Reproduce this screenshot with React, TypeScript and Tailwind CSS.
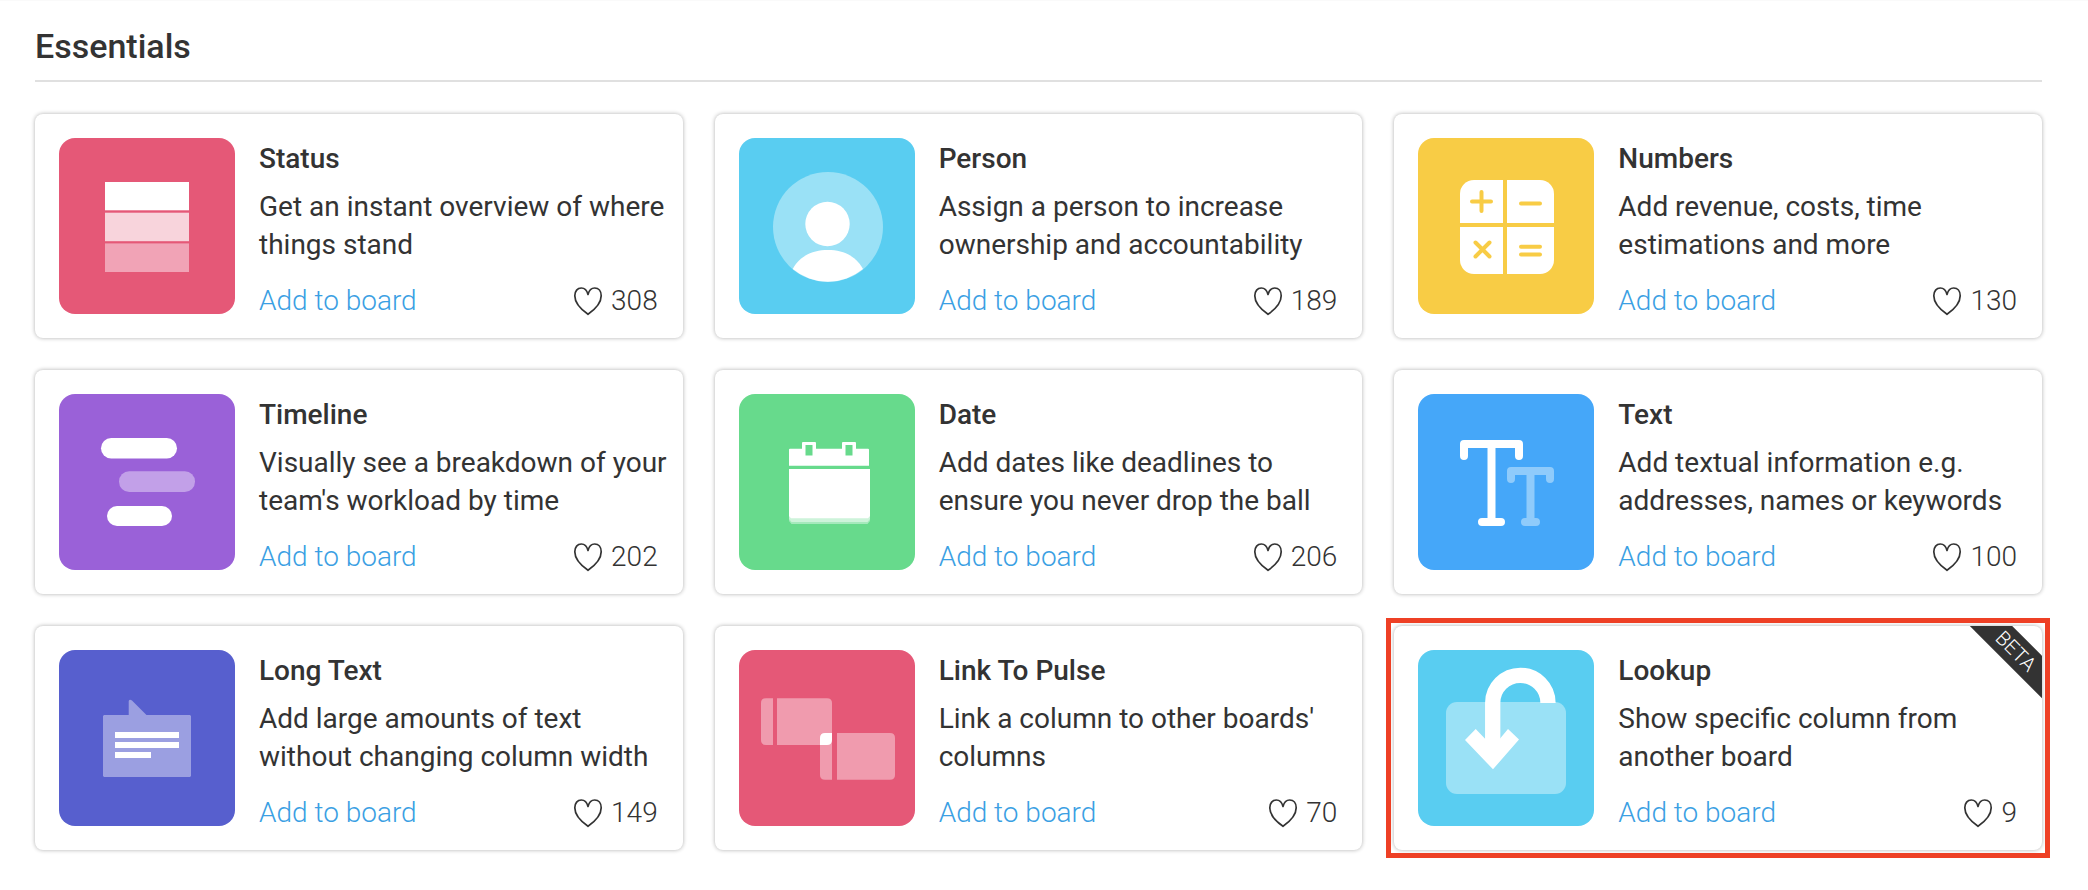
import type { ReactNode } from "react";

type Column = {
  name: string;
  description: string;
  likes: number;
  tile: string;
  icon: ReactNode;
  beta?: boolean;
  highlighted?: boolean;
};

const columns: Column[] = [
  {
    name: "Status",
    description: "Get an instant overview of where things stand",
    likes: 308,
    tile: "bg-[#e55877]",
    icon: (
      <>
        <rect x="46" y="44" width="84" height="28.3" fill="#fff" />
        <rect x="46" y="74.7" width="84" height="28.5" fill="#f8d4dc" />
        <rect x="46" y="105.4" width="84" height="28.6" fill="#f1a3b6" />
      </>
    ),
  },
  {
    name: "Person",
    description: "Assign a person to increase ownership and accountability",
    likes: 189,
    tile: "bg-[#59cdf1]",
    icon: (
      <>
        <circle cx="89" cy="89" r="55" fill="#9ae1f6" />
        <circle cx="88.5" cy="86" r="22.2" fill="#fff" />
        <path d="M53.7 131C61 117.500 74 112 89 112S116.500 117.500 124 131A55 55 0 0 1 53.7 131Z" fill="#fff" />
      </>
    ),
  },
  {
    name: "Numbers",
    description: "Add revenue, costs, time estimations and more",
    likes: 130,
    tile: "bg-[#f8cc45]",
    icon: (
      <>
        <rect x="42" y="42" width="94" height="94" rx="14" fill="#fff" />
        <path d="M87 42V136M42 87H136" stroke="#f8cc45" strokeWidth="4" />
        <path
          d="M63.5 54V73M54 63.500H73M103 65.500H122M57.500 104.500L71.500 118.500M71.500 104.500L57.500 118.500M103 108.700H122M103 116.500H122"
          stroke="#f8cc45"
          strokeWidth="4"
          strokeLinecap="round"
        />
      </>
    ),
  },
  {
    name: "Timeline",
    description: "Visually see a breakdown of your team's workload by time",
    likes: 202,
    tile: "bg-[#9a61d8]",
    icon: (
      <>
        <rect x="42" y="44" width="76" height="20.4" rx="10.2" fill="#fff" />
        <rect x="60" y="77.300" width="76" height="20.700" rx="10.2" fill="#c2a0e8" />
        <rect x="48" y="112" width="65" height="20" rx="10" fill="#fff" />
      </>
    ),
  },
  {
    name: "Date",
    description: "Add dates like deadlines to ensure you never drop the ball",
    likes: 206,
    tile: "bg-[#67da8c]",
    icon: (
      <>
        <path
          fillRule="evenodd"
          d="M50 55.500Q50 54.700 51 54.700H63V49Q63 48 64 48H76Q77 48 77 49V54.700H103V49Q103 48 104 48H116Q117 48 117 49V54.700H129Q130 54.700 130 55.700V71.700H50ZM66.500 51V61.500H73.500V51ZM106.500 51V61.500H113.500V51Z"
          fill="#fff"
        />
        <path d="M50 120H131V127L128.500 130H52.500L50 127Z" fill="#a5e9bc" />
        <path d="M50 120H131V125L128.500 128H52.500L50 125Z" fill="#cdf3da" />
        <path d="M50 75H131V122L129 124.300H52L50 122Z" fill="#fff" />
      </>
    ),
  },
  {
    name: "Text",
    description: "Add textual information e.g. addresses, names or keywords",
    likes: 100,
    tile: "bg-[#45a7f9]",
    icon: (
      <g fill="none" strokeWidth="8" strokeLinecap="round" strokeLinejoin="round">
        <path d="M93 85V77H132V85M112.500 77V128M107 128H118" stroke="#8fcbfb" />
        <path d="M46 62V50H101V62M73.500 50V128M64 128H83" stroke="#fff" />
      </g>
    ),
  },
  {
    name: "Long Text",
    description: "Add large amounts of text without changing column width",
    likes: 149,
    tile: "bg-[#575fce]",
    icon: (
      <>
        <path
          d="M45 65H69.700V51Q70.500 49 73 50.500L87.500 65H131L132 66V126L131 127H45L44 126V66Z"
          fill="#9b9fe1"
        />
        <path d="M56 82H120V88H56ZM56 92H120V98H56ZM56 102H92V108H56Z" fill="#fff" />
      </>
    ),
  },
  {
    name: "Link To Pulse",
    description: "Link a column to other boards' columns",
    likes: 70,
    tile: "bg-[#e55877]",
    icon: (
      <>
        <g fill="#f09bae">
          <path d="M34 48.300V95H27Q22 95 22 90V53Q22 48.300 27 48.300Z" />
          <path d="M38 48.300H88Q93 48.300 93 53V90Q93 95 88 95H38Z" />
          <path d="M93 83V129.700H86Q81 129.700 81 125V88Q81 83 86 83Z" />
          <path d="M98 83H151Q156 83 156 88V125Q156 129.700 151 129.700H98Z" />
        </g>
        <path d="M81 95V88Q81 83 86 83H93V90Q93 95 88 95Z" fill="#fff" />
      </>
    ),
  },
  {
    name: "Lookup",
    description: "Show specific column from another board",
    likes: 9,
    tile: "bg-[#59cdf1]",
    beta: true,
    highlighted: true,
    icon: (
      <>
        <rect x="28" y="52" width="120" height="92" rx="11" fill="#9ae1f6" />
        <path d="M130 53A27.600 27.600 0 0 0 74.700 53V105" fill="none" stroke="#fff" strokeWidth="15.3" />
        <path d="M47 90L57.700 79L75 97L90 79L101 89.500L75 119.300Z" fill="#fff" />
      </>
    ),
  },
];

function Heart() {
  return (
    <svg viewBox="0 0 30 30" className="size-[30px]" fill="none" stroke="#333" strokeWidth="1.7" aria-hidden="true">
      <path
        strokeLinejoin="round"
        d="M15 8.500C14 4.500 11.500 2 8.300 2C4.500 2 1.800 5 1.800 9.800C1.800 18 9.500 24.500 15 28.300C20.500 24.500 28.200 18 28.200 9.800C28.200 5 25.500 2 21.700 2C18.500 2 16 4.500 15 8.500Z"
      />
    </svg>
  );
}

function ColumnCard({ column }: { column: Column }) {
  return (
    <article className="relative flex gap-6 rounded-lg bg-white pt-6 pr-[25px] pb-[21px] pl-6 shadow-[0_0_4px_rgba(0,0,0,0.32)]">
      <svg viewBox="0 0 176 176" className={`size-44 shrink-0 rounded-2xl ${column.tile}`} aria-hidden="true">
        {column.icon}
      </svg>
      <div className="flex min-w-0 flex-1 flex-col justify-between pt-0.5">
        <div>
          <h3 className="mb-2.5 text-[28px] leading-[38px] font-medium">{column.name}</h3>
          <p className="-mr-3 text-[28px] leading-[38px]">{column.description}</p>
        </div>
        <div className="flex items-center justify-between text-[28px] leading-8 font-light">
          <a href="#add" className="font-light text-[#3b9fe3]">
            Add to board
          </a>
          <button type="button" aria-label={`Like ${column.name}`} className="flex items-center gap-2">
            <Heart />
            <span>{column.likes}</span>
          </button>
        </div>
      </div>
      {column.beta && (
        <div className="pointer-events-none absolute inset-0 overflow-hidden rounded-lg">
          <span className="absolute top-[10px] -right-[34px] h-[30px] w-[120px] rotate-45 bg-[#333] text-center text-[20px] leading-[30px] font-light text-white">
            BETA
          </span>
        </div>
      )}
      {column.highlighted && (
        <div className="pointer-events-none absolute -inset-2 border-[5px] border-[#ee4025]" />
      )}
    </article>
  );
}

export default function App() {
  return (
    <main className="min-h-screen border-t border-[#fafafa] bg-white pr-[46px] pb-10 pl-[35px] font-[Roboto,sans-serif] text-[#333]">
      <h2 className="mb-8 border-b-2 border-[#e0e0e0] pt-[25px] pb-3.5 text-[34px] leading-10 font-medium">
        Essentials
      </h2>
      <section className="grid auto-rows-[minmax(224px,auto)] grid-cols-3 gap-8">
        {columns.map((column) => (
          <ColumnCard key={column.name} column={column} />
        ))}
      </section>
    </main>
  );
}
